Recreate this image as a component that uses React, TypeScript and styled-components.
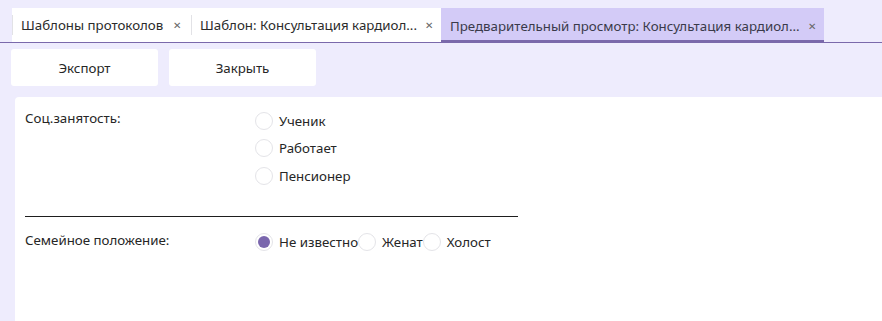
import React, { useState } from 'react';
import styled, { createGlobalStyle } from 'styled-components';

const GlobalStyle = createGlobalStyle`
  html, body {
    margin: 0;
    padding: 0;
    background: #eeecfd;
    font-family: 'Segoe UI', 'Noto Sans', 'Liberation Sans', sans-serif;
    font-size: 13.3px;
    color: #262626;
  }
`;

const Page = styled.div`
  display: flex;
  flex-direction: column;
  height: 321px;
  overflow: hidden;
`;

const TabStrip = styled.div`
  display: flex;
  align-items: stretch;
  margin-top: 8px;
  padding-left: 12px;
  height: 34px;
  border-bottom: 1px solid #7a69ab;
`;

const Tab = styled.div<{ $active?: boolean; $w: number }>`
  position: relative;
  display: flex;
  align-items: center;
  justify-content: space-between;
  box-sizing: border-box;
  width: ${p => p.$w}px;
  flex: 0 0 auto;
  padding: 0 10px 0 9px;
  background: ${p => (p.$active ? '#d3cbf7' : '#ffffff')};
  box-shadow: ${p => (p.$active ? 'inset 0 -3px 0 #7a69ab' : 'none')};
  margin-bottom: ${p => (p.$active ? '-1px' : '0')};
  color: ${p => (p.$active ? '#3a3a4a' : '#2b2b2b')};
  white-space: nowrap;
  cursor: default;

  &::before {
    content: '';
    display: ${p => (p.$active ? 'none' : 'block')};
    position: absolute;
    left: 0;
    top: 7px;
    bottom: 7px;
    width: 1px;
    background: #e2e2e6;
  }
`;

const Close = styled.span`
  font-size: 10px;
  color: #666;
  line-height: 1;
  margin-left: 8px;
`;

const Toolbar = styled.div`
  display: flex;
  gap: 11px;
  padding: 6px 0 0 11px;
`;

const Button = styled.button`
  width: 147px;
  height: 37px;
  border: none;
  border-radius: 3px;
  background: #ffffff;
  font: inherit;
  color: #262626;
  cursor: pointer;
`;

const Panel = styled.div`
  flex: 1;
  margin: 11px 0 0 15px;
  background: #ffffff;
  border-top-left-radius: 4px;
  padding: 10px 10px 0;
`;

const Field = styled.div`
  display: grid;
  grid-template-columns: 230px 1fr;
  width: 493px;
`;

const FieldLabel = styled.div`
  padding-top: 1px;
  line-height: 20px;
`;

const Options = styled.div<{ $row?: boolean }>`
  display: flex;
  flex-direction: ${p => (p.$row ? 'row' : 'column')};
`;

const Option = styled.label`
  display: flex;
  align-items: center;
  gap: 6px;
  height: 27.5px;
  cursor: pointer;
`;

const Circle = styled.span<{ $checked?: boolean }>`
  box-sizing: border-box;
  width: 18px;
  height: 18px;
  border-radius: 50%;
  border: 1px solid #e4e4e8;
  background: #fff;
  display: flex;
  align-items: center;
  justify-content: center;

  &::after {
    content: '';
    display: ${p => (p.$checked ? 'block' : 'none')};
    width: 12px;
    height: 12px;
    border-radius: 50%;
    background: #7a66ad;
  }
`;

const Divider = styled.hr`
  width: 493px;
  margin: 26px 0 12px;
  border: none;
  border-top: 1px solid #1e1e1e;
`;

const tabs = [
  { title: 'Шаблоны протоколов', width: 179 },
  { title: 'Шаблон: Консультация кардиол...', width: 250 },
  { title: 'Предварительный просмотр: Консультация кардиол...', width: 383 },
];

function RadioGroup({ options, value, row, onChange }: {
  options: string[];
  value: string | null;
  row?: boolean;
  onChange: (v: string) => void;
}) {
  return (
    <Options $row={row}>
      {options.map(o => (
        <Option key={o} onClick={() => onChange(o)}>
          <Circle $checked={value === o} />
          {o}
        </Option>
      ))}
    </Options>
  );
}

export default function App() {
  const [job, setJob] = useState<string | null>(null);
  const [family, setFamily] = useState<string | null>('Не известно');

  return (
    <Page>
      <GlobalStyle />
      <TabStrip>
        {tabs.map((t, i) => (
          <Tab key={t.title} $active={i === 2} $w={t.width}>
            <span>{t.title}</span>
            <Close>✕</Close>
          </Tab>
        ))}
      </TabStrip>
      <Toolbar>
        <Button>Экспорт</Button>
        <Button>Закрыть</Button>
      </Toolbar>
      <Panel>
        <Field>
          <FieldLabel>Соц.занятость:</FieldLabel>
          <RadioGroup options={['Ученик', 'Работает', 'Пенсионер']} value={job} onChange={setJob} />
        </Field>
        <Divider />
        <Field>
          <FieldLabel>Семейное положение:</FieldLabel>
          <RadioGroup row options={['Не известно', 'Женат', 'Холост']} value={family} onChange={setFamily} />
        </Field>
      </Panel>
    </Page>
  );
}
